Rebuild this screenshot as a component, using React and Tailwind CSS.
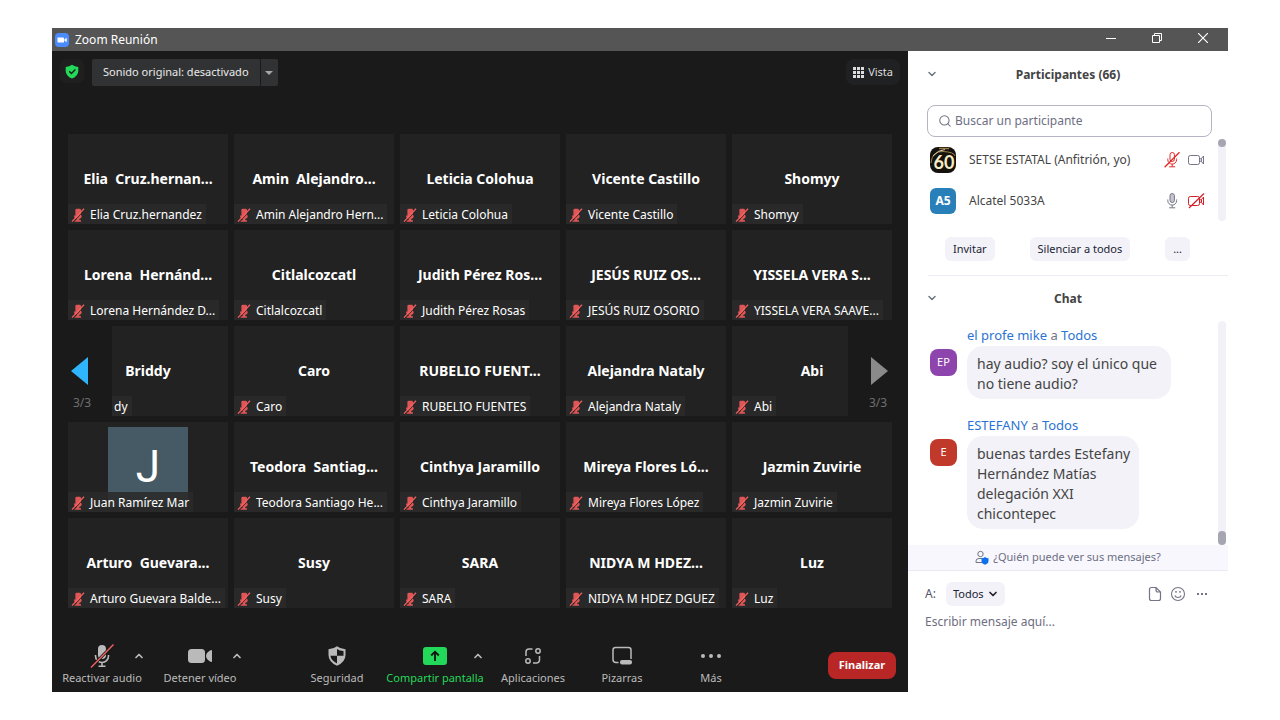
import { useState } from 'react';
import { ChevronDown, ChevronUp, Search } from 'lucide-react';

const people = [
  { title: 'Elia  Cruz.hernan...', name: 'Elia Cruz.hernandez' },
  { title: 'Amin  Alejandro...', name: 'Amin Alejandro Hern...' },
  { title: 'Leticia Colohua', name: 'Leticia Colohua' },
  { title: 'Vicente Castillo', name: 'Vicente Castillo' },
  { title: 'Shomyy', name: 'Shomyy' },
  { title: 'Lorena  Hernánd...', name: 'Lorena Hernández D...' },
  { title: 'Citlalcozcatl', name: 'Citlalcozcatl' },
  { title: 'Judith Pérez Ros...', name: 'Judith Pérez Rosas' },
  { title: 'JESÚS RUIZ OS...', name: 'JESÚS RUIZ OSORIO' },
  { title: 'YISSELA VERA S...', name: 'YISSELA VERA SAAVE...' },
  { title: 'Briddy', name: 'dy', covered: true },
  { title: 'Caro', name: 'Caro' },
  { title: 'RUBELIO FUENT...', name: 'RUBELIO FUENTES' },
  { title: 'Alejandra Nataly', name: 'Alejandra Nataly' },
  { title: 'Abi', name: 'Abi' },
  { title: 'J', name: 'Juan Ramírez Mar', avatar: true },
  { title: 'Teodora  Santiag...', name: 'Teodora Santiago He...' },
  { title: 'Cinthya Jaramillo', name: 'Cinthya Jaramillo' },
  { title: 'Mireya Flores Ló...', name: 'Mireya Flores López' },
  { title: 'Jazmin Zuvirie', name: 'Jazmin Zuvirie' },
  { title: 'Arturo  Guevara...', name: 'Arturo Guevara Balde...' },
  { title: 'Susy', name: 'Susy' },
  { title: 'SARA', name: 'SARA' },
  { title: 'NIDYA M HDEZ...', name: 'NIDYA M HDEZ DGUEZ' },
  { title: 'Luz', name: 'Luz' },
];

const messages = [
  { id: 1, from: 'el profe mike', initials: 'EP', color: 'bg-[#8e44ad]', width: 'w-[204px]', text: 'hay audio? soy el único que no tiene audio?' },
  { id: 2, from: 'ESTEFANY', initials: 'E', color: 'bg-[#c0392b]', width: 'w-[172px]', text: 'buenas tardes Estefany Hernández Matías delegación XXI chicontepec' },
];

const TileMic = () => (
  <svg width="14" height="16" viewBox="0 0 14 16" className="shrink-0" aria-hidden="true">
    <rect x="4.4" y="1.8" width="5.6" height="9" rx="1.4" fill="#e05656" />
    <path d="M3 8.5Q3 11.5 5.5 11.800V13.200H3.500V14.800H10V13.200H8.300V11.800Q10.800 11.500 10.800 8.500Z" fill="#e05656" />
    <path d="M2.600 14.800 13.600 3" stroke="#2a2020" strokeWidth=".8" />
    <path d="M1 14.600 13 1.800" stroke="#f06060" strokeWidth="1.300" />
  </svg>
);

const LineMic = ({ muted }) => (
  <svg width="18" height="18" viewBox="0 0 18 18" fill="none" stroke={muted ? '#e02828' : '#747487'} aria-hidden="true">
    <rect x="6" y="1.5" width="4.400" height="9" rx="2.200" fill={muted ? 'none' : '#c6c6d0'} />
    <path d="M3.800 7.500v1.200a4.400 4.400 0 0 0 8.800 0V7.500M8.200 13v2.600M5.200 15.800h6" />
    {muted && <path d="M.6 16.200 15.500 1.200" strokeWidth="1.300" />}
  </svg>
);

const LineCam = ({ off }) => (
  <svg width="18" height="16" viewBox="0 0 18 16" fill="none" stroke={off ? '#d02028' : '#747487'} aria-hidden="true">
    <rect x=".5" y="3.500" width="11" height="9" rx="1.800" />
    <path d="M11.700 7 13.500 6.500 15.500 4v8l-2-2.500-1.800-.5M13.500 6.500v3" />
    {off && <path d="M1 15 16 .5" strokeWidth="1.200" />}
  </svg>
);

const Tile = ({ person }) => (
  <div className="relative h-[90px] bg-[#222] overflow-hidden flex items-center justify-center">
    {person.avatar ? (
      <div className="w-20 h-20 bg-[#465a65] text-white font-[Roboto] text-[44px] leading-[80px] text-center">{person.title}</div>
    ) : (
      <span className="pb-0.5 text-white text-[14px] font-bold whitespace-pre">{person.title}</span>
    )}
    <div className={`absolute left-0 bottom-0 h-5 flex items-center bg-[#2a2a2a]/90 pt-0.5 pr-1 text-white text-[12px] whitespace-nowrap ${person.covered ? 'pl-[46px]' : 'pl-[3px] gap-[5px]'}`}>
      {!person.covered && <TileMic />}
      {person.name}
    </div>
  </div>
);

const ToolItem = ({ label, icon, menu, narrow, green }) => (
  <div className={`relative shrink-0 ${narrow ? 'w-20' : 'w-[98px]'}`}>
    <button className={`w-full flex flex-col items-center text-[11px] leading-4 whitespace-nowrap ${green ? 'text-[#23d959]' : 'text-[#bababa]'}`}>
      <span className="h-7 flex items-center">{icon}</span>
      {label}
    </button>
    {menu && (
      <button aria-label={`Opciones: ${label}`} className={`absolute top-2 text-[#bababa] ${green ? 'right-0' : 'right-1.5'}`}>
        <ChevronUp size={12} strokeWidth={3.5} />
      </button>
    )}
  </div>
);

const AudioIcon = () => (
  <svg width="24" height="24" viewBox="0 0 24 24" fill="none" aria-hidden="true">
    <rect x="8" y="1" width="8" height="14" rx="4" fill="#bababa" />
    <path d="M5.5 11v1a6.5 6.5 0 0 0 13 0v-1M12 18.5V22M8.5 22.2h7" stroke="#bababa" strokeWidth="1.6" />
    <path d="M2 22.5 22.5 1.5" stroke="#1a1a1a" strokeWidth="3" />
    <path d="M1 23.5 23.5 .5" stroke="#f06060" strokeWidth="1.4" />
  </svg>
);

const VideoIcon = () => (
  <svg width="26" height="16" viewBox="0 0 26 16" fill="#bababa" aria-hidden="true">
    <rect x="1" y="1" width="17" height="14" rx="3.5" />
    <path d="M19 8Q19 5.5 21 4L23.5 2.200Q25 1.500 25 3V13Q25 14.500 23.500 13.800L21 12Q19 10.500 19 8Z" />
  </svg>
);

const SecurityIcon = () => (
  <svg width="20" height="22" viewBox="0 0 20 22" aria-hidden="true">
    <path d="M10 1.2Q13.5 4 18.5 4.2V10q0 7-8.5 10.8Q1.5 17 1.5 10V4.2Q6.5 4 10 1.2Z" fill="#bababa" />
    <path d="M10 4Q12.5 5.8 16.5 6v4.8H10Z" fill="#1a1a1a" />
    <path d="M3.4 10.8H10v7.6Q4 15.6 3.4 10.8Z" fill="#1a1a1a" />
  </svg>
);

const ShareIcon = () => (
  <svg width="24" height="18" viewBox="0 0 24 18" aria-hidden="true">
    <rect width="24" height="18" rx="3" fill="#23d959" />
    <path d="M12 14V5M8.2 8.5 12 4.7l3.8 3.8" fill="none" stroke="#111" strokeWidth="1.8" />
  </svg>
);

const AppsIcon = () => (
  <svg width="18" height="18" viewBox="0 0 18 18" fill="none" stroke="#bababa" strokeWidth="1.5" aria-hidden="true">
    <path d="M8.5 2H5a3 3 0 0 0-3 3v4M9 16h3.5a3 3 0 0 0 3-3V9" />
    <circle cx="14" cy="4" r="2.2" />
    <circle cx="4" cy="14" r="2.2" />
  </svg>
);

const BoardIcon = () => (
  <svg width="22" height="20" viewBox="0 0 22 20" fill="none" aria-hidden="true">
    <path d="M7.5 16.5H5q-3 0-3-3V4q0-2.5 2.500-2.500h13q2.500 0 2.500 2.500v9" stroke="#bababa" strokeWidth="1.500" />
    <rect x="9" y="14" width="12" height="4.500" rx="2" fill="#bababa" />
  </svg>
);

const MoreIcon = () => (
  <svg width="22" height="6" viewBox="0 0 22 6" fill="#bababa" aria-hidden="true">
    <circle cx="3" cy="3" r="2" />
    <circle cx="11" cy="3" r="2" />
    <circle cx="19" cy="3" r="2" />
  </svg>
);

const Meeting = () => (
  <main className="flex-1 min-w-0 bg-[#1a1a1a] flex flex-col">
    {/* Top controls */}
    <header className="flex items-start justify-between px-2 pt-2">
      <div className="flex">
        <button aria-label="Cifrado" className="w-6 h-6 mr-2 rounded-md bg-[#1f1f1f] flex items-center justify-center">
          <svg width="14" height="15" viewBox="0 0 14 15" aria-hidden="true">
            <path d="M7 .7Q9.7 2.7 13.3 3v4q0 5-6.3 7.600Q.7 12 .7 7V3Q4.300 2.700 7 .7Z" fill="#23d959" />
            <path d="m4.200 7.300 2.200 2.200 4-4" fill="none" stroke="#1a1a1a" strokeWidth="1.400" />
          </svg>
        </button>
        <button className="h-[27px] px-[11px] mr-px rounded-l-xs bg-[#313233] text-white/90 text-[11px] whitespace-nowrap">Sonido original: desactivado</button>
        <button aria-label="Opciones de sonido" className="h-[27px] w-[17px] rounded-r-xs bg-[#313233] flex items-center justify-center">
          <svg width="8" height="4" viewBox="0 0 8 4" aria-hidden="true"><path d="M0 0h8L4 4Z" fill="#a6a6a6" /></svg>
        </button>
      </div>
      <button className="h-[26px] px-[7px] rounded-lg bg-[#202122] text-[#ddd] text-[11px] flex items-center gap-1">
        <svg width="11" height="11" viewBox="0 0 11 11" fill="#ddd" aria-hidden="true">
          {[0, 4, 8].map(y => [0, 4, 8].map(x => <rect key={`${x}-${y}`} x={x} y={y} width="3" height="3" />))}
        </svg>
        Vista
      </button>
    </header>

    {/* Gallery */}
    <section className="relative px-4 mt-12">
      <div className="grid grid-cols-5 gap-1.5">
        {people.map(p => <Tile key={p.title} person={p} />)}
      </div>
      <div className="absolute left-0 inset-y-0 w-15 flex items-center pointer-events-none">
        <button aria-label="Página anterior" className="w-full h-[90px] bg-[#1a1a1a] flex flex-col items-center justify-end gap-2 text-[#6f6f6f] text-[12px] leading-5 pb-[3px] pointer-events-auto">
          <svg width="18" height="28" viewBox="0 0 18 28" className="mr-1" aria-hidden="true"><path d="M0 14 17 0v28Z" fill="#2eb5fc" /></svg>
          3/3
        </button>
      </div>
      <div className="absolute right-0 inset-y-0 w-15 flex items-center pointer-events-none">
        <button aria-label="Página siguiente" className="w-full h-[90px] bg-[#1a1a1a] flex flex-col items-center justify-end gap-2 text-[#6f6f6f] text-[12px] leading-5 pb-[3px] pointer-events-auto">
          <svg width="18" height="28" viewBox="0 0 18 28" className="ml-1" aria-hidden="true"><path d="M17 14 0 0v28Z" fill="#8a8a8a" /></svg>
          3/3
        </button>
      </div>
    </section>

    {/* Toolbar */}
    <footer className="mt-auto pl-px pr-3 pb-1.5 flex items-start">
      <ToolItem label="Reactivar audio" icon={<AudioIcon />} menu />
      <ToolItem label="Detener vídeo" icon={<VideoIcon />} menu />
      <div className="w-[39px] shrink-0" />
      <ToolItem label="Seguridad" icon={<SecurityIcon />} />
      <ToolItem label="Compartir pantalla" icon={<ShareIcon />} menu green />
      <ToolItem label="Aplicaciones" icon={<AppsIcon />} />
      <ToolItem label="Pizarras" icon={<BoardIcon />} narrow />
      <ToolItem label="Más" icon={<MoreIcon />} />
      <button className="ml-auto mt-2.5 h-[27px] w-[68px] shrink-0 rounded-lg bg-[#b92626] text-white text-[11px] font-bold">Finalizar</button>
    </footer>
  </main>
);

const PanelHeader = ({ title }) => (
  <div className="flex items-center px-[18px]">
    <button aria-label={`Contraer ${title}`} className="text-[#6e7680]"><ChevronDown size={12} strokeWidth={3} /></button>
    <h2 className="flex-1 pr-3 pt-0.5 text-center text-[12px] leading-5 font-bold text-[#444]">{title}</h2>
  </div>
);

const Participants = () => {
  const [query, setQuery] = useState('');
  return (
    <section>
      <div className="pt-3"><PanelHeader title="Participantes (66)" /></div>
      <div className="relative ml-[19px] mr-4 mt-5">
        <Search size={14} className="absolute left-[11px] top-[9px] text-[#747487]" strokeWidth={1.8} />
        <input value={query} onChange={e => setQuery(e.target.value)} aria-label="Buscar un participante"
          placeholder="Buscar un participante"
          className="block w-full h-8 pl-[27px] pr-3 pb-0.5 rounded-lg border border-[#b4b4c4] text-[12px] text-[#39394d] placeholder:text-[#6e6e82] outline-none" />
      </div>
      <div className="flex mt-0.5">
        <ul className="flex-1 pl-[22px] pr-3 text-[12px] text-[#444]">
          <li className="h-[41px] flex items-center">
            <svg width="26" height="26" viewBox="0 0 26 26" className="mr-[13px] rounded-lg" aria-hidden="true">
              <rect width="26" height="26" fill="#15120e" />
              <path d="M1 16Q2 4 13 4.500T25 9" fill="none" stroke="#c0a060" strokeWidth=".8" />
              <path d="M3 9Q8 3 15 2.500" fill="none" stroke="#ded6c0" />
              <path d="M9 1.500h10" stroke="#9b7a44" strokeWidth="1.500" />
              <text x="14" y="22" textAnchor="middle" fontFamily="Lato, sans-serif" fontSize="18" fontWeight="700" fill="#f8ecc4">60</text>
            </svg>
            <span className="flex-1">SETSE ESTATAL (Anfitrión, yo)</span>
            <LineMic muted />
            <span className="ml-1.5"><LineCam /></span>
          </li>
          <li className="h-[41px] flex items-center">
            <span className="w-[26px] h-[26px] mr-[13px] rounded-md bg-[#2980b9] text-white text-[12px] font-bold flex items-center justify-center">A5</span>
            <span className="flex-1">Alcatel 5033A</span>
            <LineMic />
            <span className="ml-1.5"><LineCam off /></span>
          </li>
        </ul>
        <div className="w-2 mr-0.5 rounded-full bg-[#f1f1f7]"><div className="h-2 rounded-full bg-[#a6a6b2]" /></div>
      </div>
      <div className="flex justify-between pl-[37px] pr-[38px] pt-4 pb-3.5 text-[11px] text-[#232333]">
        <button className="h-6 px-2 rounded-md bg-[#f2f2f8]">Invitar</button>
        <button className="h-6 px-2 rounded-md bg-[#f2f2f8]">Silenciar a todos</button>
        <button className="h-6 px-2 rounded-md bg-[#f2f2f8]">...</button>
      </div>
    </section>
  );
};

const Chat = () => {
  const [draft, setDraft] = useState('');
  return (
    <section className="flex-1 flex flex-col">
      <div className="ml-5 border-t border-[#ededf4]" />
      <div className="pt-[11px]"><PanelHeader title="Chat" /></div>
      <div className="flex mt-3">
        <ul className="flex-1 pl-[22px] pt-1 pb-4 space-y-4">
          {messages.map(m => (
            <li key={m.id}>
              <p className="pl-[37px] text-[13px] leading-5 text-[#747487]">
                <span className="text-[#2b73d2]">{m.from}</span> a <span className="text-[#2b73d2]">Todos</span>
              </p>
              <div className="flex items-start gap-[10px]">
                <span className={`w-[27px] h-[27px] mt-1 rounded-lg text-white text-[11px] flex items-center justify-center ${m.color}`}>{m.initials}</span>
                <p className={`mt-px pl-2.5 pr-1 pt-2 pb-[5px] rounded-2xl bg-[#f2f2f8] text-[14px] leading-5 text-[#444] ${m.width}`}>{m.text}</p>
              </div>
            </li>
          ))}
        </ul>
        <div className="w-2 mr-0.5 rounded-full bg-[#f1f1f7] flex items-end"><div className="w-2 h-3.5 rounded-full bg-[#a6a6b2]" /></div>
      </div>
      <button className="h-[26px] border-b border-[#e9e9f2] bg-[#f7f7fd] text-[11px] text-[#6e6e82] flex items-center justify-center gap-1">
        <svg width="14" height="15" viewBox="0 0 14 15" fill="none" aria-hidden="true">
          <circle cx="5.5" cy="4" r="2.700" stroke="#747487" />
          <path d="M7 12.500H1V11q0-2.500 3-2.500h3" stroke="#747487" />
          <path d="M10 7q1.500 1.200 3.500 1.200V11q0 2.500-3.500 3.800Q6.500 13.500 6.500 11V8.200Q8.500 8.200 10 7Z" fill="#0e71eb" />
        </svg>
        ¿Quién puede ver sus mensajes?
      </button>
      <div className="flex items-center pl-[17px] pr-5 pt-[11px] text-[12px] text-[#55556a]">
        <label htmlFor="recipient">A:</label>
        <div className="relative ml-2.5">
          <select id="recipient" className="block appearance-none h-6 w-[59px] pl-[7px] rounded-md bg-[#f2f2f8] text-[#232333] text-[11px]">
            <option>Todos</option>
          </select>
          <ChevronDown size={12} strokeWidth={3.5} className="absolute right-1.5 top-[6px] text-[#232333] pointer-events-none" />
        </div>
        <div className="ml-auto flex items-center gap-2 text-[#747487]">
          <button aria-label="Archivo">
            <svg width="15" height="16" viewBox="0 0 15 16" fill="none" stroke="currentColor" strokeWidth="1.200" aria-hidden="true">
              <path d="M9 1.500H4.500q-2 0-2 2v9q0 2 2 2h7q2 0 2-2V6ZM9 1.500V4q0 2 2 2h2.500" />
            </svg>
          </button>
          <button aria-label="Emoji">
            <svg width="16" height="16" viewBox="0 0 16 16" fill="none" stroke="currentColor" strokeWidth="1.100" aria-hidden="true">
              <circle cx="8" cy="8" r="6.500" />
              <path d="M4.800 9.500q.8 2 3.200 2t3.200-2" />
              <path d="M6 5v1.800M10 5v1.800" strokeWidth="1.400" />
            </svg>
          </button>
          <button aria-label="Más opciones" className="ml-0.5">
            <svg width="12" height="4" viewBox="0 0 12 4" fill="currentColor" aria-hidden="true">
              <rect x="1" y="1" width="2" height="2" /><rect x="5" y="1" width="2" height="2" /><rect x="9" y="1" width="2" height="2" />
            </svg>
          </button>
        </div>
      </div>
      <textarea value={draft} onChange={e => setDraft(e.target.value)} aria-label="Escribir mensaje aquí"
        placeholder="Escribir mensaje aquí..."
        className="flex-1 mx-[17px] mt-1.5 resize-none outline-none text-[12px] leading-5 text-[#39394d] placeholder:text-[#6e6e82]" />
    </section>
  );
};

const App = () => (
  <div className="min-h-screen bg-white px-[52px] py-7 flex flex-col font-['Noto_Sans',sans-serif]">
    {/* Title bar */}
    <div className="h-[23px] bg-[#555] flex items-center pl-[3px] pr-0.5 text-white">
      <svg width="14" height="14" viewBox="0 0 14 14" aria-hidden="true">
        <rect width="14" height="14" rx="4" fill="#4a8cff" />
        <path d="M2.500 4.500H8q1 0 1 1v4H3.500q-1 0-1-1ZM9.500 6.200l2.200-1.500v4.600L9.500 7.800Z" fill="#fff" />
      </svg>
      <h1 className="ml-1.5 text-[12px]">Zoom Reunión</h1>
      <div className="ml-auto flex pb-1">
        <button aria-label="Minimizar" className="w-[46px] flex justify-center">
          <svg width="10" height="10" viewBox="0 0 10 10" stroke="#fff" aria-hidden="true"><path d="M0 5.500h10" /></svg>
        </button>
        <button aria-label="Restaurar" className="w-[46px] flex justify-center">
          <svg width="10" height="10" viewBox="0 0 10 10" fill="none" stroke="#fff" aria-hidden="true"><path d="M.5 2.500h7v7h-7ZM2.500 2.500v-2h7v7h-2" /></svg>
        </button>
        <button aria-label="Cerrar" className="w-[46px] flex justify-center">
          <svg width="10" height="10" viewBox="0 0 10 10" stroke="#fff" strokeWidth="1.200" aria-hidden="true"><path d="m0 0 10 10M10 0 0 10" /></svg>
        </button>
      </div>
    </div>
    <div className="flex-1 flex">
      <Meeting />
      <aside className="w-80 shrink-0 flex flex-col">
        <Participants />
        <Chat />
      </aside>
    </div>
  </div>
);

export default App;
